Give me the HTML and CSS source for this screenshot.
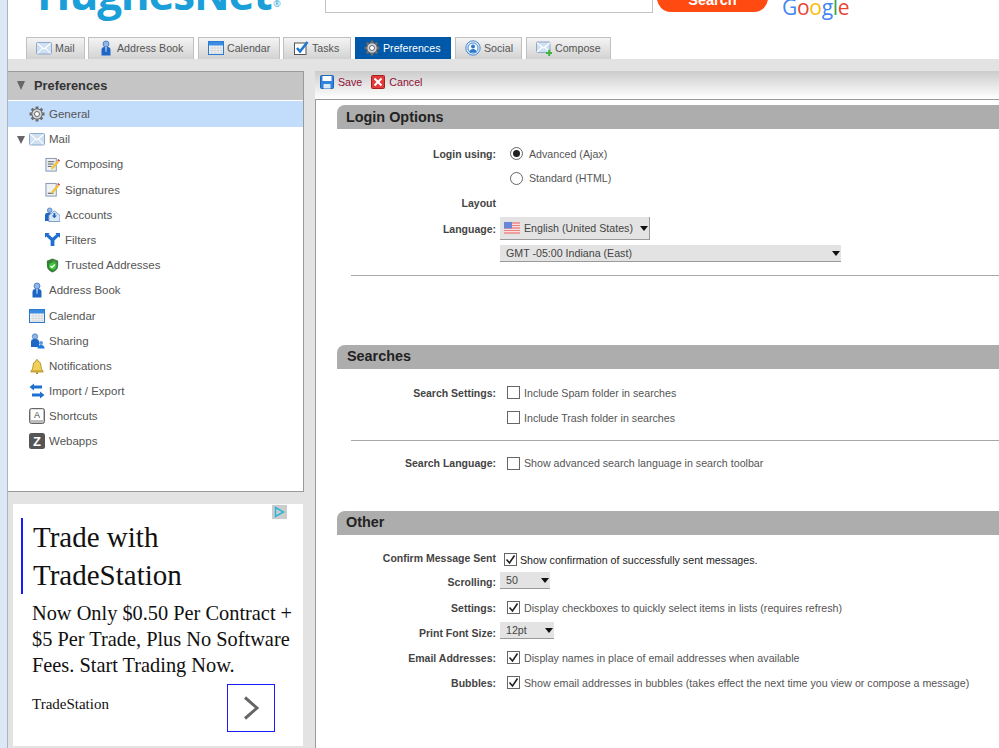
FILE: index.html
```html
<!DOCTYPE html>
<html lang="en">
<head>
<meta charset="utf-8">
<title>Preferences</title>
<link rel="stylesheet" href="styles.css">
</head>
<body>
<svg class="sprite" width="0" height="0" aria-hidden="true">
  <defs>
    <symbol id="i-mail" viewBox="0 0 16 16"><rect x=".5" y="2.500" width="15" height="11.500" rx="1" fill="#cfe0f2" stroke="#8fa9cb"/><path d="M1.500 3.500l6.500 5.500 6.500-5.500M1.500 13.500l5-5.500M14.500 13.500l-5-5.500" fill="none" stroke="#fff" stroke-width="1.100"/></symbol>
    <symbol id="i-person" viewBox="0 0 16 16"><circle cx="8" cy="4" r="3" fill="#8fb6e6" stroke="#3d74c0" stroke-width=".8"/><path d="M3.500 15.500v-5.500q0-3 3-3h3q3 0 3 3v5.500z" fill="#1f66c4"/><path d="M7 7h2l-.5 5h-1z" fill="#9cc4f0"/></symbol>
    <symbol id="i-cal" viewBox="0 0 16 16"><rect x=".5" y="1.500" width="15" height="13" fill="#f2f2f2" stroke="#2a7ad0"/><rect x="1" y="2" width="14" height="3.500" fill="#3a8ce0"/><path d="M1 8h14M1 10.500h14M1 13h14M4 6v8M7 6v8M10 6v8M13 6v8" stroke="#cdd3da" stroke-width=".7"/></symbol>
    <symbol id="i-task" viewBox="0 0 16 16"><rect x="1.500" y="3" width="11.500" height="11.500" fill="#fff" stroke="#555"/><path d="M4 8l3 3.500L14.500 2" fill="none" stroke="#1f78d1" stroke-width="2.600"/></symbol>
    <symbol id="i-gear" viewBox="0 0 16 16"><path d="M8 .5v3M8 12.500v3M.5 8h3M12.500 8h3M2.700 2.700l2.100 2.100M11.200 11.200l2.100 2.100M2.700 13.300l2.100-2.100M11.200 4.800l2.100-2.100" stroke="#6a6a6a" stroke-width="2.800"/><circle cx="8" cy="8" r="5.200" fill="#cfd3d7" stroke="#6a6a6a"/><circle cx="8" cy="8" r="2.500" fill="#fff" stroke="#6a6a6a"/></symbol>
    <symbol id="i-social" viewBox="0 0 16 16"><circle cx="8" cy="8" r="7.200" fill="#d6e6f7" stroke="#4a8cd2"/><circle cx="8" cy="8" r="5" fill="#fff" stroke="#4a8cd2"/><circle cx="8" cy="6.500" r="2" fill="#2f78c9"/><path d="M4.500 12.500q0-3.500 3.500-3.500t3.500 3.500z" fill="#2f78c9"/></symbol>
    <symbol id="i-compose" viewBox="0 0 16 16"><rect x=".5" y="2" width="13.500" height="10.500" rx="1" fill="#cfe0f2" stroke="#8fa9cb"/><path d="M1 3l6.500 5 6.500-5M1 12l5-4.500M14 12l-5-4.500" fill="none" stroke="#fff" stroke-width="1.100"/><path d="M10 12h2.200v-2.200h2V12H16.500v2h-2.300v2h-2v-2H10z" fill="#3fb53f"/></symbol>
    <symbol id="i-composing" viewBox="0 0 16 16"><rect x="1" y="1.500" width="11" height="13.500" fill="#eef2f7" stroke="#7d93b0"/><path d="M3 5h7M3 7.500h6M3 10h4" stroke="#444" stroke-width=".9"/><path d="M7 11l6-7 2 1.500-6 7-2.500 1z" fill="#f1c232"/><path d="M13 3.500l1-1.500 2 1.500-1 1.500z" fill="#d33"/></symbol>
    <symbol id="i-sign" viewBox="0 0 16 16"><rect x="1" y="1.500" width="11" height="13.500" fill="#eef2f7" stroke="#7d93b0"/><path d="M3 12h6" stroke="#444"/><path d="M7 10l6-7 2 1.500-6 7-2.500 1z" fill="#f1c232"/><path d="M13 2.500l1-1.500 2 1.500-1 1.500z" fill="#d33"/></symbol>
    <symbol id="i-accounts" viewBox="0 0 16 16"><circle cx="5" cy="3.500" r="2.500" fill="#8fb6e6" stroke="#3d74c0" stroke-width=".7"/><path d="M0 15V9q0-3 3-3h3v9z" fill="#1f66c4"/><path d="M4 9l6-5 6 5v6.500H4z" fill="#dce8f5" stroke="#5b86b8" stroke-width=".8"/><path d="M9 6.500h2V9h1.800L10 12 7.200 9H9z" fill="#1f66c4"/></symbol>
    <symbol id="i-filter" viewBox="0 0 16 16"><path d="M0 1h5l-1.200 1.500L8 6l4.200-3.500L11 1h5v5l-1.500-1.200L10 9v6H6V9L1.500 4.800 0 6z" fill="#1f6fd0"/></symbol>
    <symbol id="i-shield" viewBox="0 0 16 16"><path d="M8 .5l6 2.500v5q0 5-6 7.500Q2 13 2 8V3z" fill="#3a7d3a"/><path d="M8 2l4.500 2v4q0 4-4.500 6z" fill="#5fa85f" opacity=".6"/><circle cx="8" cy="8.500" r="3.800" fill="#35c935"/><path d="M5.800 8.500l1.700 1.700 3-3.200" fill="none" stroke="#fff" stroke-width="1.500"/></symbol>
    <symbol id="i-share" viewBox="0 0 16 16"><circle cx="6" cy="3.500" r="2.700" fill="#8fb6e6" stroke="#3d74c0" stroke-width=".7"/><path d="M2 14V9q0-3 3-3h2q3 0 3 3v5z" fill="#1f66c4"/><circle cx="12" cy="10" r="2" fill="#5a9be6"/><path d="M8.500 15.500q0-3.500 3.500-3.500t3.500 3.500z" fill="#1f78e0"/></symbol>
    <symbol id="i-bell" viewBox="0 0 16 16"><path d="M2 13q2-1.500 2-5 0-4 3-5 0-1.500 1-1.500T9 3q3 1 3 5 0 3.500 2 5z" fill="#f2cf55" stroke="#a8862a" stroke-width=".8"/><rect x="1.500" y="13" width="13" height="1.500" fill="#c9a53a"/><circle cx="8" cy="15.200" r=".9" fill="#8a6d1c"/></symbol>
    <symbol id="i-swap" viewBox="0 0 16 16"><path d="M5 .5L.5 4 5 7.500V5.500h8V2.500H5z" fill="#1f6fd0"/><path d="M11 8.500l4.500 3.500L11 15.500v-2H3v-3h8z" fill="#1f6fd0"/></symbol>
    <symbol id="i-key" viewBox="0 0 16 16"><rect x=".5" y=".5" width="15" height="15" rx="2" fill="#bdbdbd" stroke="#666"/><rect x="2" y="1.500" width="12" height="10.500" fill="#fff"/><text x="8" y="10" font-size="9" font-family="Liberation Sans" text-anchor="middle" fill="#444">A</text></symbol>
    <symbol id="i-z" viewBox="0 0 16 16"><rect width="16" height="16" rx="2.500" fill="#555"/><text x="8" y="12.500" font-size="13" font-weight="700" font-family="Liberation Sans" text-anchor="middle" fill="#fff">Z</text></symbol>
    <symbol id="i-save" viewBox="0 0 14 14"><rect x=".5" y=".5" width="13" height="13" rx="1" fill="#2f83dc" stroke="#1f66b4"/><rect x="2.500" y="1" width="9" height="5" fill="#fff"/><rect x="3.500" y="9" width="7" height="4.500" fill="#dbe9f8"/></symbol>
    <symbol id="i-cancel" viewBox="0 0 14 14"><rect x=".5" y=".5" width="13" height="13" rx="1" fill="#e23a3a" stroke="#a81f1f"/><path d="M3.500 3.500l7 7M10.500 3.500l-7 7" stroke="#fff" stroke-width="2"/></symbol>
    <symbol id="i-flag" viewBox="0 0 16 12"><rect width="16" height="12" fill="#fff"/><path d="M0 1h16M0 3.500h16M0 6h16M0 8.500h16M0 11h16" stroke="#e88080" stroke-width="1.300"/><rect width="8" height="6.500" fill="#6a86d8"/></symbol>
    <symbol id="i-check" viewBox="0 0 13 13"><path d="M2.500 6.500l3 3.500 5-7.500" fill="none" stroke="#222" stroke-width="1.600"/></symbol>
  </defs>
</svg>

<div class="app">
  <div class="strip"></div>
  <div class="main">
    <header class="top">
      <div class="logo">HughesNet<sup class="reg">®</sup></div>
      <div class="searchbox"></div>
      <div class="searchbtn">Search</div>
      <div class="google"><span class="g-b">G</span><span class="g-r">o</span><span class="g-y">o</span><span class="g-b">g</span><span class="g-g">l</span><span class="g-r">e</span></div>
    </header>

    <nav class="tabs">
      <div class="tab t-mail"><svg class="ti"><use href="#i-mail"/></svg>Mail</div>
      <div class="tab t-book"><svg class="ti"><use href="#i-person"/></svg>Address Book</div>
      <div class="tab t-cal"><svg class="ti"><use href="#i-cal"/></svg>Calendar</div>
      <div class="tab t-task"><svg class="ti"><use href="#i-task"/></svg>Tasks</div>
      <div class="tab active t-pref"><svg class="ti"><use href="#i-gear"/></svg>Preferences</div>
      <div class="tab t-soc"><svg class="ti"><use href="#i-social"/></svg>Social</div>
      <div class="tab t-comp"><svg class="ti"><use href="#i-compose"/></svg>Compose</div>
    </nav>
    <div class="band"></div>

    <div class="panes">
      <aside class="side">
        <div class="tree">
          <div class="tree-head"><span class="tri"></span>Preferences</div>
          <div class="node sel"><svg class="ni"><use href="#i-gear"/></svg>General</div>
          <div class="node"><span class="tri small"></span><svg class="ni"><use href="#i-mail"/></svg>Mail</div>
          <div class="node sub"><svg class="ni"><use href="#i-composing"/></svg>Composing</div>
          <div class="node sub"><svg class="ni"><use href="#i-sign"/></svg>Signatures</div>
          <div class="node sub"><svg class="ni"><use href="#i-accounts"/></svg>Accounts</div>
          <div class="node sub"><svg class="ni"><use href="#i-filter"/></svg>Filters</div>
          <div class="node sub"><svg class="ni"><use href="#i-shield"/></svg>Trusted Addresses</div>
          <div class="node"><svg class="ni"><use href="#i-person"/></svg>Address Book</div>
          <div class="node"><svg class="ni"><use href="#i-cal"/></svg>Calendar</div>
          <div class="node"><svg class="ni"><use href="#i-share"/></svg>Sharing</div>
          <div class="node"><svg class="ni"><use href="#i-bell"/></svg>Notifications</div>
          <div class="node"><svg class="ni"><use href="#i-swap"/></svg>Import / Export</div>
          <div class="node"><svg class="ni"><use href="#i-key"/></svg>Shortcuts</div>
          <div class="node"><svg class="ni"><use href="#i-z"/></svg>Webapps</div>
        </div>

        <div class="ad">
          <div class="adchoice"><svg width="11" height="12" viewBox="0 0 11 12"><path d="M1.500 1.500l8 4.500-8 4.500z" fill="none" stroke="#29b6d8" stroke-width="1.500"/></svg></div>
          <h2 class="ad-title">Trade with TradeStation</h2>
          <p class="ad-body">Now Only $0.50 Per Contract + $5 Per Trade, Plus No Software Fees. Start Trading Now.</p>
          <div class="ad-foot">
            <span class="ad-brand">TradeStation</span>
            <div class="ad-btn"><svg width="16" height="24" viewBox="0 0 16 24"><path d="M2 1.500L14 12 2 22.500" fill="none" stroke="#666" stroke-width="3"/></svg></div>
          </div>
        </div>
      </aside>

      <main class="content">
        <div class="toolbar">
          <span class="act"><svg class="ai"><use href="#i-save"/></svg>Save</span>
          <span class="act"><svg class="ai"><use href="#i-cancel"/></svg>Cancel</span>
        </div>
        <div class="page">
          <section class="sec sec-login">
            <h3 class="sec-title">Login Options</h3>
            <div class="row h-login1"><span class="lbl">Login using:</span><span class="radio on"></span><span class="val">Advanced (Ajax)</span></div>
            <div class="row h-24"><span class="lbl"></span><span class="radio"></span><span class="val">Standard (HTML)</span></div>
            <div class="row h-25"><span class="lbl">Layout</span></div>
            <div class="row h-language"><span class="lbl">Language:</span>
              <div class="sel-box s-lang"><svg class="flag"><use href="#i-flag"/></svg><span class="sel-text">English (United States)</span><span class="caret"></span></div></div>
            <div class="row h-tz"><span class="lbl"></span>
              <div class="sel-box s-tz"><span class="sel-text">GMT -05:00 Indiana (East)</span><span class="caret"></span></div></div>
            <hr class="rule r-login">
          </section>

          <section class="sec sec-search">
            <h3 class="sec-title">Searches</h3>
            <div class="row h-search1"><span class="lbl">Search Settings:</span><span class="cb"></span><span class="val">Include Spam folder in searches</span></div>
            <div class="row h-25"><span class="lbl"></span><span class="cb"></span><span class="val">Include Trash folder in searches</span></div>
            <hr class="rule r-search">
            <div class="row h-lang"><span class="lbl">Search Language:</span><span class="cb"></span><span class="val">Show advanced search language in search toolbar</span></div>
          </section>

          <section class="sec sec-other">
            <h3 class="sec-title">Other</h3>
            <div class="row h-other1"><span class="lbl lift">Confirm Message Sent</span><span class="cb chk"><svg class="ck"><use href="#i-check"/></svg></span><span class="val dark">Show confirmation of successfully sent messages.</span></div>
            <div class="row h-24"><span class="lbl lift">Scrolling:</span><div class="sel-box s-small s-50"><span class="sel-text">50</span><span class="caret"></span></div></div>
            <div class="row h-25"><span class="lbl">Settings:</span><span class="cb"><svg class="ck"><use href="#i-check"/></svg></span><span class="val">Display checkboxes to quickly select items in lists (requires refresh)</span></div>
            <div class="row h-25"><span class="lbl">Print Font Size:</span><div class="sel-box s-small s-12"><span class="sel-text">12pt</span><span class="caret"></span></div></div>
            <div class="row h-25"><span class="lbl">Email Addresses:</span><span class="cb"><svg class="ck"><use href="#i-check"/></svg></span><span class="val">Display names in place of email addresses when available</span></div>
            <div class="row h-25"><span class="lbl">Bubbles:</span><span class="cb"><svg class="ck"><use href="#i-check"/></svg></span><span class="val">Show email addresses in bubbles (takes effect the next time you view or compose a message)</span></div>
          </section>
        </div>
      </main>
    </div>
  </div>
</div>
</body>
</html>
```

FILE: styles.css
```css
* { box-sizing: border-box; }
html, body { margin: 0; padding: 0; background: #fff; }
body { font-family: "Liberation Sans", Arial, sans-serif; font-size: 10.670px; color: #444; }
.sprite { position: absolute; }
.app { display: flex; width: 999px; height: 748px; overflow: hidden; }
.strip { width: 8px; flex: none; background: #dce8f5; border-right: 1px solid #a9b4bf; }
.main { flex: 1; min-width: 0; display: flex; flex-direction: column; }

/* header */
.top { height: 37px; flex: none; display: flex; align-items: flex-end; overflow: hidden; background: #fff; }
.logo { width: 317px; margin-bottom: 21px; padding-left: 29px; flex: none; font-family: "Open Sans", sans-serif; font-weight: 700; font-size: 44px; line-height: 46px; letter-spacing: -1.200px; color: #1a9fd8; white-space: nowrap; }
.reg { font-size: 9px; font-weight: 400; letter-spacing: 0; vertical-align: baseline; position: relative; top: -3px; left: 2px; line-height: 0; }
.searchbox { width: 328px; height: 40px; margin-bottom: 24px; flex: none; background: #fff; border: 1px solid #c4c4c4; }
.searchbtn { width: 111px; height: 30px; margin: 0 15px 25px 4px; flex: none; background: #ff4b12; border-radius: 0 0 14px 14px; color: #fff; font-weight: 700; font-size: 14.500px; line-height: 16px; padding-top: 10px; text-align: center; }
.google { margin-bottom: 17px; margin-left: -1px; font-family: "Open Sans", sans-serif; font-size: 21px; line-height: 26px; letter-spacing: -.3px; }
.g-b { color: #4285f4; } .g-r { color: #ea4335; } .g-y { color: #fbbc05; } .g-g { color: #34a853; }

/* tabs */
.tabs { height: 22px; flex: none; display: flex; padding-left: 18px; background: #fff; }
.tab { height: 22px; display: flex; align-items: center; padding: 0 0 1px 9px; border: 1px solid #c0c0c0; border-bottom: 0; background: linear-gradient(#f4f4f4, #d2d2d2); color: #555; white-space: nowrap; }
.tab.active { background: #0059a8; border-color: #0059a8; color: #fff; }
.t-mail { width: 59px; margin-right: 3px; }
.t-book { width: 106px; margin-right: 4px; }
.t-cal { width: 82px; margin-right: 3px; }
.t-task { width: 68px; margin-right: 4px; }
.t-pref { width: 96px; margin-right: 4px; padding-left: 8px; }
.t-soc { width: 67px; margin-right: 4px; }
.t-comp { width: 85px; }
.ti { width: 16px; height: 16px; margin-right: 3px; flex: none; }
.band { height: 12px; flex: none; background: #e3e3e3; }

/* panes */
.panes { flex: 1; min-height: 0; display: flex; background: #e3e3e3; }
.side { width: 296px; flex: none; display: flex; flex-direction: column; }
.tree { height: 421px; flex: none; background: #fff; border: 1px solid #9a9a9a; border-left: 0; }
.tree-head { height: 28px; display: flex; align-items: center; background: #c5c5c5; padding: 0 0 2px 9px; margin-bottom: 1px; font-size: 12.800px; font-weight: 700; color: #333; }
.tri { width: 0; height: 0; margin-right: 9px; border-left: 4.500px solid transparent; border-right: 4.500px solid transparent; border-top: 9px solid #666; }
.tri.small { position: absolute; margin: 0; left: 9px; top: 9px; border-left-width: 4px; border-right-width: 4px; border-top-width: 8px; }
.node { position: relative; height: 25.200px; display: flex; align-items: center; padding-left: 21px; font-size: 11.500px; color: #555; }
.node.sub { padding-left: 37px; }
.node.sel { height: 26px; margin-bottom: -.400px; background: #c2dcfb; }
.ni { width: 16px; height: 16px; margin-right: 4px; flex: none; }
.node.sub .ni { width: 15px; height: 15px; margin-right: 5px; }

/* ad */
.ad { width: 290px; height: 242px; margin: 12px 0 0 5px; flex: none; position: relative; background: #fff; padding: 14px 8px 0 19px; color: #111; font-family: "Liberation Serif", serif; }
.adchoice { position: absolute; right: 16px; top: 1px; width: 15px; height: 14px; background: #ccc; display: flex; align-items: center; justify-content: center; }
.ad-title { margin: 0 0 0 -11px; padding-left: 10px; width: 170px; border-left: 2px solid #1a1aff; font-weight: 400; font-size: 29px; line-height: 38px; }
.ad-body { margin: 6px 0 0; font-size: 20.350px; line-height: 26px; }
.ad-foot { display: flex; justify-content: space-between; align-items: flex-start; width: 243px; margin-top: 6px; }
.ad-brand { font-size: 15px; line-height: 17px; margin-top: 12px; }
.ad-btn { width: 48px; height: 48px; border: 1px solid #1a1aff; display: flex; align-items: center; justify-content: center; }

/* content */
.content { flex: 1; min-width: 0; margin-left: 11px; display: flex; flex-direction: column; }
.toolbar { height: 29px; flex: none; display: flex; align-items: center; gap: 9px; padding: 0 0 6px 5px; background: linear-gradient(#cccccc, #fff); border-bottom: 1px solid #9a9a9a; color: #8f1133; }
.act { display: flex; align-items: center; }
.ai { width: 14px; height: 14px; margin-right: 4px; }
.page { flex: 1; min-height: 0; background: #fff; border-left: 1px solid #9a9a9a; padding: 5px 0 0 21px; overflow: hidden; }
.sec-title { margin: 0; height: 24px; line-height: 23px; padding-left: 9px; background: #adadad; border-top-left-radius: 8px; font-size: 14.400px; font-weight: 700; color: #222; }
.sec-login { height: 240px; }
.sec-login .sec-title { line-height: 25px; }
.sec-search { height: 166px; }
.sec-search .sec-title { padding-left: 10px; }
.row { display: flex; align-items: center; }
.lbl { width: 159px; flex: none; text-align: right; font-size: 10.500px; font-weight: 700; color: #444; }
.lift { position: relative; top: -1px; }
.val { margin-left: 4px; white-space: nowrap; color: #555; }
.val.dark { margin-left: 3px; color: #222; position: relative; top: 1px; }
.h-25 { height: 25px; }
.h-24 { height: 24px; }
.h-login1 { height: 25px; margin-top: 12px; }
.h-language { height: 25px; margin-top: 1px; }
.h-tz { height: 24px; }
.h-search1 { height: 25px; margin-top: 11px; }
.h-lang { height: 24px; margin-top: 10px; }
.h-other1 { height: 24px; margin-top: 12px; }
.radio { width: 13px; height: 13px; margin: 0 2px 0 14px; flex: none; border: 1px solid #666; border-radius: 50%; background: #fff; display: flex; align-items: center; justify-content: center; }
.radio.on::after { content: ""; width: 7px; height: 7px; border-radius: 50%; background: #222; }
.cb { width: 13px; height: 13px; margin-left: 11px; flex: none; border: 1px solid #666; background: #fff; display: flex; align-items: center; justify-content: center; }
.cb.chk { margin-left: 8px; }
.ck { width: 13px; height: 13px; flex: none; }
.sel-box { margin-left: 4px; display: flex; align-items: center; background: #e3e3e3; border-bottom: 1px solid #9a9a9a; color: #444; white-space: nowrap; position: relative; }
.s-lang { width: 150px; height: 23px; border-right: 1px solid #9a9a9a; padding-left: 4px; }
.flag { width: 16px; height: 12px; margin-right: 4px; flex: none; }
.s-tz { width: 341px; height: 17px; padding-left: 6px; }
.s-small { height: 17px; padding-left: 6px; }
.s-50 { width: 50px; margin-bottom: 6px; }
.s-12 { width: 54px; margin-bottom: 4px; }
.caret { position: absolute; right: 1px; top: 50%; margin-top: -2px; width: 0; height: 0; border-left: 4px solid transparent; border-right: 4px solid transparent; border-top: 5px solid #111; }
.rule { margin: 0 0 0 14px; border: 0; border-top: 1px solid #a8a8a8; }
.r-login { margin-top: 10px; }
.r-search { margin-top: 10px; }
```
